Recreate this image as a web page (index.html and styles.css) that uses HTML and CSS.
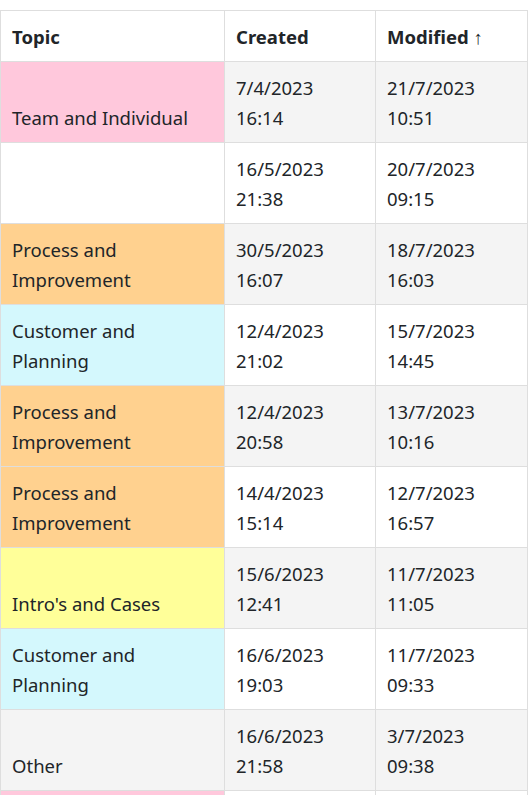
FILE: index.html
```html
<!DOCTYPE html>
<html>
<head>
<meta charset="utf-8">
<link rel="stylesheet" href="styles.css">
</head>
<body>
<table class="grid">
  <colgroup>
    <col class="c-topic">
    <col class="c-created">
    <col class="c-modified">
  </colgroup>
  <thead>
    <tr><th>Topic</th><th>Created</th><th>Modified <span class="arrow">↑</span></th></tr>
  </thead>
  <tbody>
    <tr><td class="t-team">Team and Individual</td><td>7/4/2023<br>16:14</td><td>21/7/2023<br>10:51</td></tr>
    <tr><td></td><td>16/5/2023<br>21:38</td><td>20/7/2023<br>09:15</td></tr>
    <tr><td class="t-process">Process and Improvement</td><td>30/5/2023<br>16:07</td><td>18/7/2023<br>16:03</td></tr>
    <tr><td class="t-customer">Customer and Planning</td><td>12/4/2023<br>21:02</td><td>15/7/2023<br>14:45</td></tr>
    <tr><td class="t-process">Process and Improvement</td><td>12/4/2023<br>20:58</td><td>13/7/2023<br>10:16</td></tr>
    <tr><td class="t-process">Process and Improvement</td><td>14/4/2023<br>15:14</td><td>12/7/2023<br>16:57</td></tr>
    <tr><td class="t-intro">Intro's and Cases</td><td>15/6/2023<br>12:41</td><td>11/7/2023<br>11:05</td></tr>
    <tr><td class="t-customer">Customer and Planning</td><td>16/6/2023<br>19:03</td><td>11/7/2023<br>09:33</td></tr>
    <tr><td>Other</td><td>16/6/2023<br>21:58</td><td>3/7/2023<br>09:38</td></tr>
    <tr class="tail"><td class="t-team"></td><td></td><td></td></tr>
  </tbody>
</table>
</body>
</html>
```

FILE: styles.css
```css
html, body {
  margin: 0;
  padding: 0;
  background: #ffffff;
}
body {
  padding-top: 10px;
  font-family: "Noto Sans", "Open Sans", sans-serif;
  font-size: 18.5px;
  line-height: 30px;
  color: #212529;
}
.grid {
  border-collapse: collapse;
  table-layout: fixed;
  width: 527px;
}
.c-topic { width: 224px; }
.c-created { width: 151px; }
.c-modified { width: 152px; }
.grid th,
.grid td {
  border: 1px solid #dedede;
  padding: 11px 11px 9px;
  text-align: left;
  vertical-align: bottom;
}
.grid tr.tail td {
  height: 60px;
}
.grid th {
  font-weight: 700;
}
.arrow {
  font-weight: 400;
}
.grid tbody tr:nth-child(odd) td {
  background: #f4f4f4;
}
.grid tbody tr td.t-team { background: #ffc8dc; }
.grid tbody tr td.t-process { background: #ffd18f; }
.grid tbody tr td.t-customer { background: #d4f8fd; }
.grid tbody tr td.t-intro { background: #ffff99; }
```
